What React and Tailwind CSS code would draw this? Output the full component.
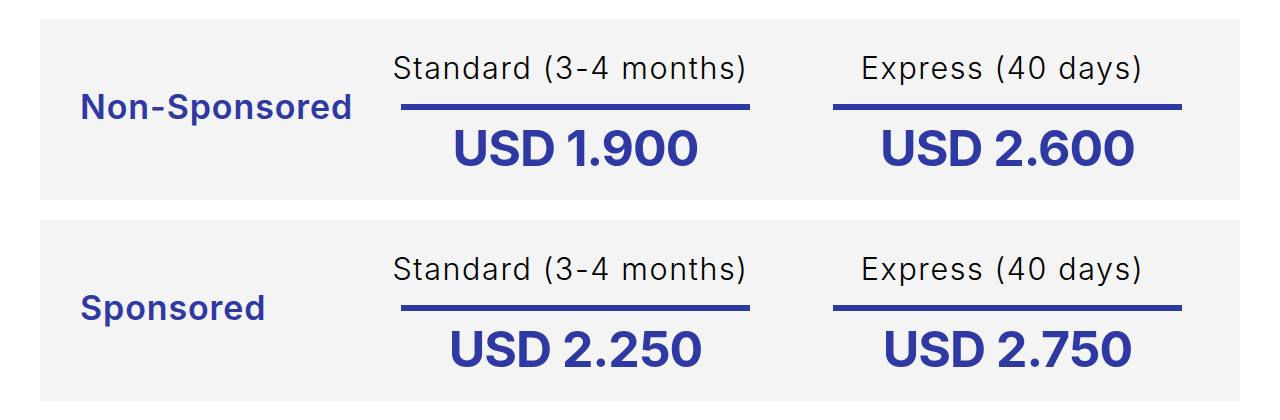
const rows = [
  {
    label: 'Non-Sponsored',
    standard: 'USD 1.900',
    express: 'USD 2.600',
  },
  {
    label: 'Sponsored',
    standard: 'USD 2.250',
    express: 'USD 2.750',
  },
];

function PriceColumn({ title, price }) {
  return (
    <div className="w-[349px] flex flex-col items-center pt-[31px]">
      <div className="pr-[10px] whitespace-nowrap text-[30.5px] leading-[36px] font-light tracking-[1.6px] text-black">
        {title}
      </div>
      <div className="w-full h-[6px] bg-[#2f39a3] mt-[18px]" />
      <div className="whitespace-nowrap text-[50px] leading-[51px] font-bold tracking-[-1px] text-[#2f39a3] mt-[13px]">
        {price}
      </div>
    </div>
  );
}

export default function App() {
  return (
    <div
      className="w-[1280px] h-[420px] bg-white px-10 pt-[19px] flex flex-col gap-5"
      style={{ fontFamily: 'Inter, "Noto Sans", sans-serif' }}
    >
      {rows.map((row) => (
        <div key={row.label} className="h-[181px] bg-[#f4f4f4] flex items-start">
          <div className="w-[361px] pl-10 pt-[70px] whitespace-nowrap text-[34px] leading-[36px] font-semibold tracking-[0.9px] text-[#2f39a3]">
            {row.label}
          </div>
          <PriceColumn title="Standard (3-4 months)" price={row.standard} />
          <div className="w-[83px]" />
          <PriceColumn title="Express (40 days)" price={row.express} />
        </div>
      ))}
    </div>
  );
}
